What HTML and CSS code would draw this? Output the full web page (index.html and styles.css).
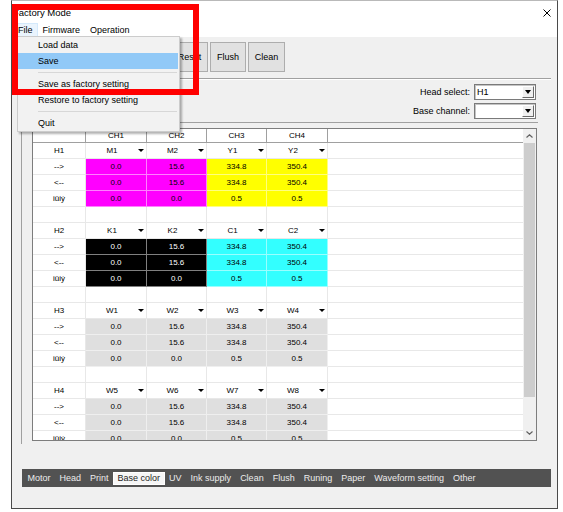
FILE: index.html
```html
<!doctype html>
<html>

<head>
    <meta charset="UTF-8" />
    <meta name="viewport" content="width=device-width, initial-scale=1.0" />
    <link rel="stylesheet" href="styles.css">
</head>

<body>
    <div class="window">
        <div class="titlebar">
            <span class="titlebar__text">Factory Mode</span>
            <svg class="titlebar__close" width="8" height="8" viewBox="0 0 8 8">
                <path d="M0.5 0.5L7.5 7.5M7.5 0.5L0.5 7.5" stroke="#000" stroke-width="1" fill="none" />
            </svg>
        </div>
        <div class="menubar">
            <span class="menubar__item menubar__item--open">File</span>
            <span class="menubar__item">Firmware</span>
            <span class="menubar__item">Operation</span>
        </div>
        <div class="client">
            <div class="toolbar">
                <button class="toolbar__button toolbar__button--reset">Reset</button>
                <button class="toolbar__button toolbar__button--flush">Flush</button>
                <button class="toolbar__button toolbar__button--clean">Clean</button>
            </div>
            <div class="separator"></div>
            <div class="selectors">
                <div class="selector">
                    <span class="selector__label">Head select:</span>
                    <div class="combo">
                        <span class="combo__text">H1</span>
                        <span class="combo__button"><span class="arrow"></span></span>
                    </div>
                </div>
                <div class="selector">
                    <span class="selector__label">Base channel:</span>
                    <div class="combo">
                        <span class="combo__text"></span>
                        <span class="combo__button"><span class="arrow"></span></span>
                    </div>
                </div>
            </div>
            <div class="panel">
                <div class="grid">
                    <div class="grid__main">
                        <div class="grid__header">
                            <div class="hcell"></div>
                            <div class="hcell">CH1</div>
                            <div class="hcell">CH2</div>
                            <div class="hcell">CH3</div>
                            <div class="hcell">CH4</div>
                            <div class="hcell hcell--fill"></div>
                        </div>
                        <div class="grid__body"></div>
                    </div>
                    <div class="scrollbar">
                        <div class="scrollbar__arrow">
                            <svg width="7" height="4" viewBox="0 0 7 4">
                                <path d="M0.5 3.5L3.5 0.8L6.5 3.5" stroke="#606060" stroke-width="1.2" fill="none" />
                            </svg>
                        </div>
                        <div class="scrollbar__thumb"></div>
                        <div class="scrollbar__track"></div>
                        <div class="scrollbar__arrow">
                            <svg width="7" height="4" viewBox="0 0 7 4">
                                <path d="M0.5 0.5L3.5 3.2L6.5 0.5" stroke="#606060" stroke-width="1.2" fill="none" />
                            </svg>
                        </div>
                    </div>
                </div>
            </div>
            <div class="tabs">
                <span class="tabs__item">Motor</span>
                <span class="tabs__item">Head</span>
                <span class="tabs__item">Print</span>
                <span class="tabs__item tabs__item--active">Base color</span>
                <span class="tabs__item">UV</span>
                <span class="tabs__item">Ink supply</span>
                <span class="tabs__item">Clean</span>
                <span class="tabs__item">Flush</span>
                <span class="tabs__item">Runing</span>
                <span class="tabs__item">Paper</span>
                <span class="tabs__item">Waveform setting</span>
                <span class="tabs__item">Other</span>
            </div>
        </div>
    </div>

    <div class="dropdown">
        <div class="dropdown__item">Load data</div>
        <div class="dropdown__item dropdown__item--hover">Save</div>
        <div class="dropdown__sep"></div>
        <div class="dropdown__item">Save as factory setting</div>
        <div class="dropdown__item">Restore to factory setting</div>
        <div class="dropdown__sep"></div>
        <div class="dropdown__item">Quit</div>
    </div>

    <div class="annotation"></div>

    <script>
        (() => {
            const GROUPS = [
                { head: 'H1', names: ['M1', 'M2', 'Y1', 'Y2'], colors: ['magenta', 'magenta', 'yellow', 'yellow'] },
                { head: 'H2', names: ['K1', 'K2', 'C1', 'C2'], colors: ['black', 'black', 'cyan', 'cyan'] },
                { head: 'H3', names: ['W1', 'W2', 'W3', 'W4'], colors: ['grey', 'grey', 'grey', 'grey'] },
                { head: 'H4', names: ['W5', 'W6', 'W7', 'W8'], colors: ['grey', 'grey', 'grey', 'grey'] },
            ];
            const VALUE_ROWS = [
                ['-->', ['0.0', '15.6', '334.8', '350.4']],
                ['<--', ['0.0', '15.6', '334.8', '350.4']],
                ['iüiý', ['0.0', '0.0', '0.5', '0.5']],
            ];
            const $body = document.querySelector('.grid__body');

            function createCell(text, modifier) {
                const $cell = document.createElement('div');
                $cell.className = 'cell' + (modifier ? ' cell--' + modifier : '');
                if (text) $cell.textContent = text;
                return $cell;
            }

            function createComboCell(text) {
                const $cell = createCell('', 'combo');
                const $text = document.createElement('span');
                $text.className = 'cell__text';
                $text.textContent = text;
                const $arrow = document.createElement('span');
                $arrow.className = 'arrow arrow--small';
                $cell.append($text, $arrow);
                return $cell;
            }

            function createRow(cells) {
                const $row = document.createElement('div');
                $row.className = 'grid__row';
                $row.append(...cells, createCell('', 'fill'));
                return $row;
            }

            const $fragment = document.createDocumentFragment();
            GROUPS.forEach((group, i) => {
                $fragment.append(createRow([
                    createCell(group.head),
                    ...group.names.map(createComboCell),
                ]));
                VALUE_ROWS.forEach(([label, values]) => {
                    $fragment.append(createRow([
                        createCell(label),
                        ...values.map((v, j) => createCell(v, group.colors[j])),
                    ]));
                });
                if (i < GROUPS.length - 1) {
                    $fragment.append(createRow([1, 2, 3, 4, 5].map(() => createCell(''))));
                }
            });
            $body.append($fragment);
        })();
    </script>
</body>

</html>
```

FILE: styles.css
```css
* {
    box-sizing: border-box;
    margin: 0;
    padding: 0;
}

body {
    position: relative;
    background-color: #fff;
    color: #000;
    font-family: "Liberation Sans", Arial, sans-serif;
    font-size: 9px;
    line-height: 12px;
}

.window {
    display: flex;
    flex-direction: column;
    width: 547px;
    height: 509px;
    margin-left: 11px;
    background-color: #f0f0f0;
    border: 1px solid #4a4a4a;
    border-top-color: #b9b9b9;
}

.titlebar {
    display: flex;
    align-items: center;
    justify-content: space-between;
    height: 20px;
    padding: 3px 6px 0 1px;
    background-color: #fff;
    font-size: 9.5px;
}

.menubar {
    display: flex;
    height: 16px;
    padding-left: 1px;
    background-color: #fff;
}

.menubar__item {
    height: 14px;
    margin-top: 2px;
    padding: 0 4px;
    border: 1px solid transparent;
    line-height: 12px;
}

.menubar__item--open {
    background-color: #eaf4fd;
    border-color: #d4e9fb;
}

.client {
    flex: 1;
    padding: 0 6px 0 9px;
}

.toolbar {
    display: flex;
    gap: 2px;
    margin: 5px 0 0 150px;
}

.toolbar__button {
    height: 30px;
    padding: 0;
    background-color: #e1e1e1;
    border: 1px solid #adadad;
    color: #000;
    font-family: inherit;
    font-size: 9px;
}

.toolbar__button--reset {
    width: 37px;
}

.toolbar__button--flush {
    width: 36px;
}

.toolbar__button--clean {
    width: 37px;
}

.separator {
    margin-top: 6px;
    border-top: 1px solid #a0a0a0;
    border-bottom: 1px solid #fff;
}

.selectors {
    display: grid;
    row-gap: 3px;
    justify-items: end;
    padding: 4px 15px 0 0;
}

.selector {
    display: flex;
    align-items: center;
}

.selector__label {
    margin-right: 4px;
}

.combo {
    display: flex;
    align-items: center;
    width: 62px;
    height: 16px;
    padding-left: 2px;
    background-color: #fff;
    border: 1px solid #7a7a7a;
    box-shadow: inset 1px 1px 0 #c4c4c4;
}

.combo__button {
    display: flex;
    align-items: center;
    justify-content: center;
    width: 12px;
    height: 12px;
    margin: 0 1px 0 auto;
    background-color: #f0f0f0;
    border: 1px solid;
    border-color: #fff #6a6a6a #6a6a6a #fff;
}

.arrow {
    width: 0;
    height: 0;
    border-left: 3.5px solid transparent;
    border-right: 3.5px solid transparent;
    border-top: 4px solid #000;
}

.arrow--small {
    border-left-width: 3px;
    border-right-width: 3px;
    border-top-width: 3px;
    margin-right: 2px;
}

.panel {
    margin: 3px 13px 0 0;
    padding: 5px 0 3px 10px;
    border-top: 1px solid #a0a0a0;
    border-left: 1px solid #a0a0a0;
}

.grid {
    display: flex;
    width: 505px;
    height: 313px;
    background-color: #fff;
    border: 1px solid #7d7d7d;
}

.grid__main {
    flex: 1;
    overflow: hidden;
}

.grid__header,
.grid__row {
    display: grid;
    grid-template-columns: 53px 61px 60px 60px 61px 1fr;
}

.hcell {
    height: 14px;
    border-right: 1px solid #a0a0a0;
    border-bottom: 1px solid #a0a0a0;
    font-size: 8px;
    line-height: 13px;
    text-align: center;
}

.hcell--fill {
    border-right: none;
}

.cell {
    display: flex;
    align-items: center;
    justify-content: center;
    height: 16px;
    border-right: 1px solid #e8e8e8;
    border-bottom: 1px solid #e8e8e8;
    font-size: 8px;
}

.cell--fill {
    border-right: none;
}

.cell__text {
    flex: 1;
    text-align: center;
}

.cell--magenta,
.cell--yellow,
.cell--cyan,
.cell--black,
.cell--grey {
    border-color: rgba(255, 255, 255, 0.5);
}

.cell--magenta {
    background-color: #ff00ff;
}

.cell--yellow {
    background-color: #ffff00;
}

.cell--cyan {
    background-color: #33ffff;
}

.cell--black {
    background-color: #000;
    color: #fff;
}

.cell--grey {
    background-color: #dfdfdf;
}

.scrollbar {
    display: flex;
    flex-direction: column;
    width: 13px;
    background-color: #f0f0f0;
}

.scrollbar__arrow {
    display: flex;
    align-items: center;
    justify-content: center;
    height: 14px;
}

.scrollbar__thumb {
    height: 254px;
    margin: 0 1px;
    background-color: #cdcdcd;
}

.scrollbar__track {
    flex: 1;
}

.tabs {
    display: flex;
    align-items: center;
    height: 18px;
    margin: 25px 0 0 1px;
    padding-left: 1px;
    background-color: #525252;
}

.tabs__item {
    height: 13px;
    padding: 0 3.5px;
    border: 1px solid transparent;
    color: #ececec;
    line-height: 11px;
}

.tabs__item--active {
    background-color: #f6f6f6;
    border-color: #fff;
    color: #1e1e1e;
}

.dropdown {
    position: absolute;
    left: 17px;
    top: 36px;
    width: 163px;
    background-color: #f2f2f2;
    border: 1px solid #cccccc;
    box-shadow: 2px 2px 2px rgba(0, 0, 0, 0.3);
}

.dropdown__item {
    height: 16px;
    padding-left: 20px;
    line-height: 16px;
}

.dropdown__item--hover {
    margin-right: 1px;
    background-color: #91c9f7;
}

.dropdown__sep {
    height: 1px;
    margin: 3px 2px 3px 20px;
    background-color: #d7d7d7;
}

.annotation {
    position: absolute;
    left: 12px;
    top: 4px;
    width: 187px;
    height: 91px;
    border: 6px solid #ff0000;
}
```
